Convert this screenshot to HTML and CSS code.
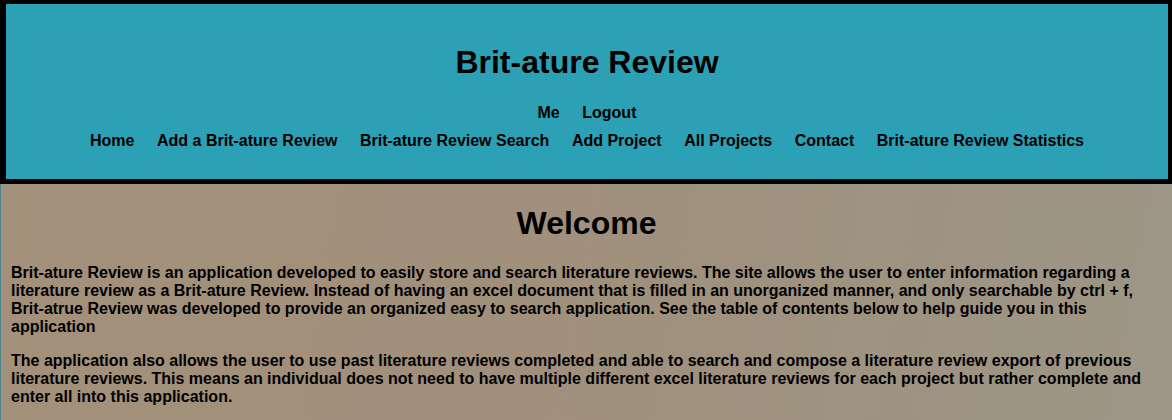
FILE: index.html
```html
<!DOCTYPE html>
<html lang="en">
<head>
<meta charset="utf-8">
<title>Brit-ature Review</title>
<link rel="stylesheet" href="styles.css">
</head>
<body>
<header class="site-header">
  <h1 class="site-title">Brit-ature Review</h1>
  <nav class="user-nav">
    <a href="#">Me</a>
    <a href="#">Logout</a>
  </nav>
  <nav class="main-nav">
    <a href="#">Home</a>
    <a href="#">Add a Brit-ature Review</a>
    <a href="#">Brit-ature Review Search</a>
    <a href="#">Add Project</a>
    <a href="#">All Projects</a>
    <a href="#">Contact</a>
    <a href="#">Brit-ature Review Statistics</a>
  </nav>
</header>
<main class="content">
  <h1 class="welcome">Welcome</h1>
  <p class="intro">Brit-ature Review is an application developed to easily store and search literature reviews. The site allows the user to enter information regarding a literature review as a Brit-ature Review. Instead of having an excel document that is filled in an unorganized manner, and only searchable by ctrl + f, Brit-atrue Review was developed to provide an organized easy to search application. See the table of contents below to help guide you in this application</p>
  <p class="intro">The application also allows the user to use past literature reviews completed and able to search and compose a literature review export of previous literature reviews. This means an individual does not need to have multiple different excel literature reviews for each project but rather complete and enter all into this application.</p>
</main>
</body>
</html>
```
FILE: styles.css
```css
html, body {
  margin: 0;
  padding: 0;
}

body {
  font-family: "Liberation Sans", Arial, sans-serif;
  color: #000;
  background: linear-gradient(100deg, #a3917a 0%, #a08f7b 45%, #9d9686 100%);
  min-height: 100vh;
}

.site-header {
  background: #2ca0b4;
  border-style: solid;
  border-color: #000;
  border-width: 4px 4px 5px 6px;
  padding: 40px 0 29px;
  text-align: center;
}

.site-title {
  margin: 0;
  font-size: 32px;
  line-height: 37px;
  font-weight: bold;
}

.user-nav,
.main-nav {
  display: flex;
  justify-content: center;
  gap: 22.5px;
  font-size: 16px;
  line-height: 18px;
  font-weight: bold;
}

.user-nav {
  margin-top: 23px;
}

.main-nav {
  margin-top: 10px;
}

.user-nav a,
.main-nav a {
  color: #000;
  text-decoration: none;
}

.content {
  border-left: 1px solid #4a8790;
  padding: 21px 10px 20px 10px;
}

.welcome {
  margin: 0 0 22px;
  text-align: center;
  font-size: 32px;
  line-height: 37px;
  font-weight: bold;
}

.intro {
  margin: 0 0 16px;
  font-size: 16px;
  line-height: 18px;
  font-weight: bold;
}
```
